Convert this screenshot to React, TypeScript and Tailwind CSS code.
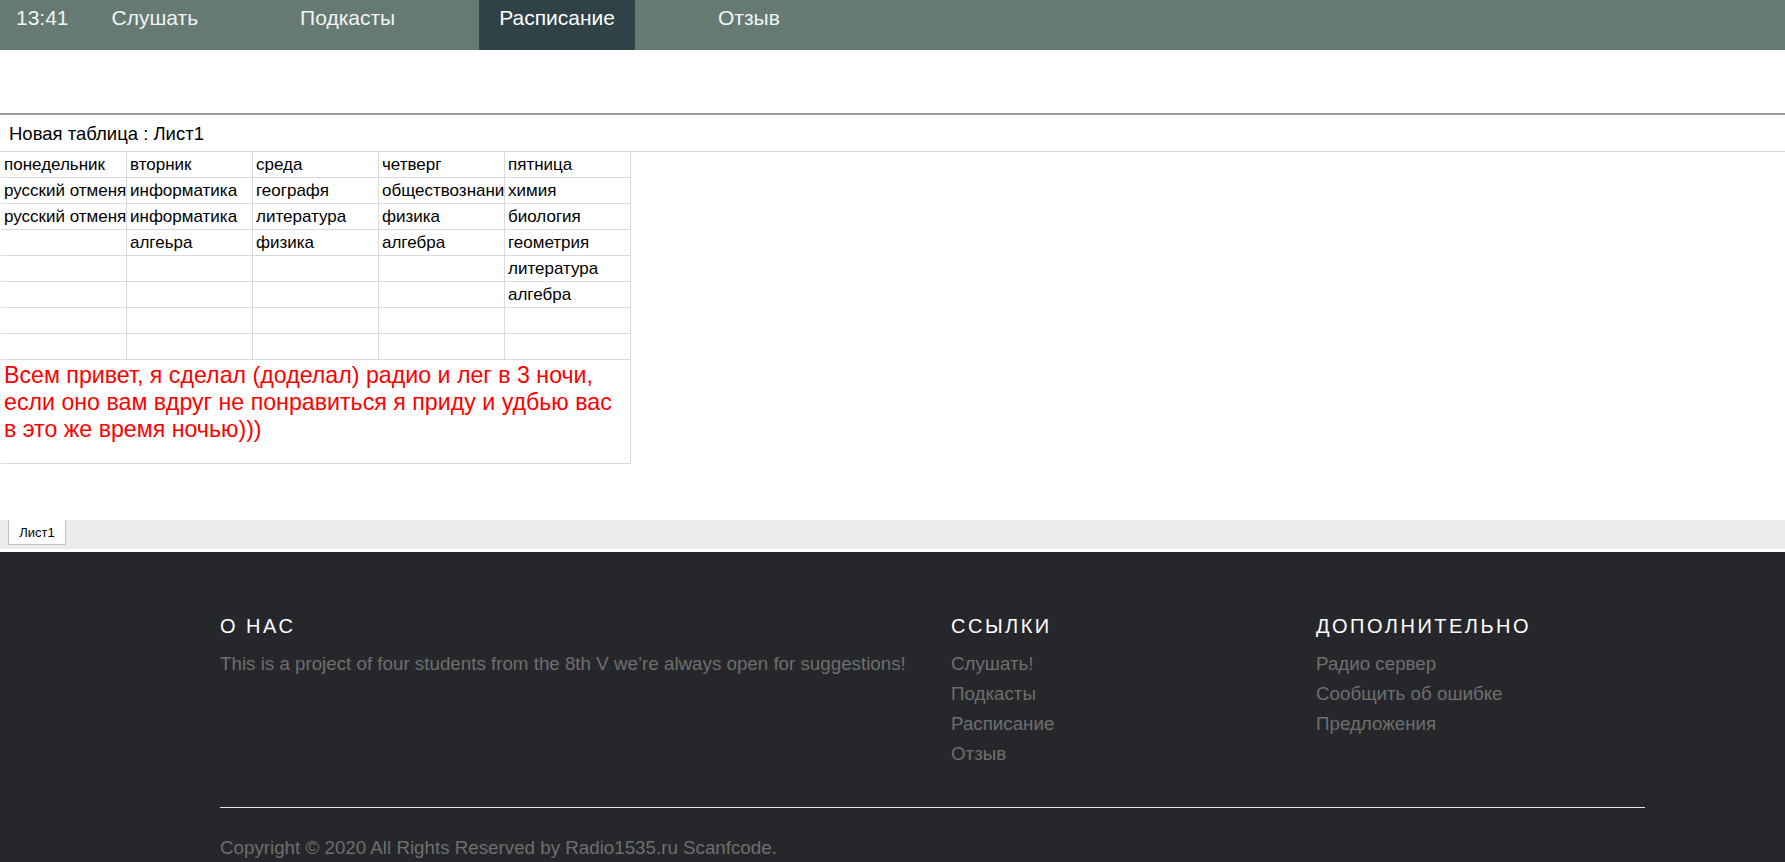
import React from "react";

const rows: string[][] = [
  ["понедельник", "вторник", "среда", "четверг", "пятница"],
  ["русский отменяется", "информатика", "географя", "обществознание", "химия"],
  ["русский отменяется", "информатика", "литература", "физика", "биология"],
  ["", "алгеьра", "физика", "алгебра", "геометрия"],
  ["", "", "", "", "литература"],
  ["", "", "", "", "алгебра"],
  ["", "", "", "", ""],
  ["", "", "", "", ""],
];

export default function App() {
  return (
    <div className="min-h-screen bg-white font-['Liberation_Sans',Arial,sans-serif]">
      {/* Top navigation */}
      <nav className="flex h-[50px] bg-[#657a73] text-[21px] text-[#f3f3f3]">
        <div className="ml-[16px] pt-[6px] leading-[24px]">13:41</div>
        <div className="ml-[23px] px-[20px] pt-[6px] leading-[24px]">Слушать</div>
        <div className="ml-[62px] px-[20px] pt-[6px] leading-[24px]">Подкасты</div>
        <div className="ml-[64px] bg-[#2f4247] px-[20px] pt-[6px] leading-[24px] text-white">
          Расписание
        </div>
        <div className="ml-[63px] px-[20px] pt-[6px] leading-[24px]">Отзыв</div>
      </nav>

      {/* Spacer */}
      <div className="h-[65px] border-b-2 border-[#9c9c9c]" />

      {/* Sheet header */}
      <div className="h-[37px] border-b border-[#dadada] pl-[9px] pt-[8px] text-[18.5px] leading-[21px] text-black">
        Новая таблица : Лист1
      </div>

      {/* Table */}
      <div className="ml-[1px] w-[630px] text-[17px] text-black">
        {rows.map((r, i) => (
          <div key={i} className="flex">
            {r.map((c, j) => (
              <div
                key={j}
                className="h-[26px] w-[126px] shrink-0 overflow-hidden whitespace-nowrap border-b border-r border-[#dadada] pl-[3px] pt-[2px] leading-[22px]"
              >
                {c}
              </div>
            ))}
          </div>
        ))}
        <div className="h-[104px] border-b border-r border-[#dadada] pl-[3px] pr-[4px] pt-[2px] text-[23.2px] leading-[26.8px] text-[#ff0000]">
          Всем привет, я сделал (доделал) радио и лег в 3 ночи, если оно вам вдруг не понравиться я приду и удбью вас в это же время ночью)))
        </div>
      </div>

      {/* Sheet tabs */}
      <div className="mt-[56px] h-[29px] bg-[#ececec]">
        <div className="ml-[8px] h-[25px] w-[58px] border-x border-b border-[#c2c2c2] bg-white text-center text-[13px] leading-[25px] text-black">
          Лист1
        </div>
      </div>
      <div className="h-[3px] bg-white" />

      {/* Footer */}
      <footer className="bg-[#26272b] pt-[63px] pb-[40px]">
        <div className="ml-[220px] w-[1425px]">
          <div className="flex">
            <div className="w-[731px]">
              <h3 className="text-[20px] leading-[23px] tracking-[2.5px] text-white">О НАС</h3>
              <p className="mt-[11px] text-[18.75px] leading-[30px] text-[#6e6e6e]">
                This is a project of four students from the 8th V we’re always open for suggestions!
              </p>
            </div>
            <div className="w-[365px]">
              <h3 className="text-[20px] leading-[23px] tracking-[2.5px] text-white">ССЫЛКИ</h3>
              <ul className="mt-[11px] text-[18.75px] leading-[30px] text-[#6e6e6e]">
                <li>Слушать!</li>
                <li>Подкасты</li>
                <li>Расписание</li>
                <li>Отзыв</li>
              </ul>
            </div>
            <div>
              <h3 className="text-[20px] leading-[23px] tracking-[2.5px] text-white">ДОПОЛНИТЕЛЬНО</h3>
              <ul className="mt-[11px] text-[18.75px] leading-[30px] text-[#6e6e6e]">
                <li>Радио сервер</li>
                <li>Сообщить об ошибке</li>
                <li>Предложения</li>
              </ul>
            </div>
          </div>
          <div className="mt-[38px] h-px bg-[#e6e6e6]" />
          <p className="mt-[25px] text-[18.75px] leading-[30px] text-[#6e6e6e]">
            Copyright © 2020 All Rights Reserved by Radio1535.ru Scanfcode.
          </p>
        </div>
      </footer>
    </div>
  );
}
